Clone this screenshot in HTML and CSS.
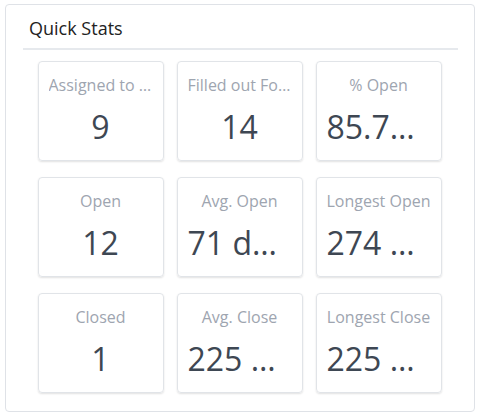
FILE: index.html
```html
<!DOCTYPE html>
<html lang="en">
<head>
  <meta charset="UTF-8">
  <meta name="viewport" content="width=device-width, initial-scale=1.0">
  <title>Quick Stats</title>
  <link rel="stylesheet" href="styles.css">
</head>
<body>
  <div class="panel">
    <div class="panel-header">Quick Stats</div>
    <div class="stats">
      <div class="stat"><div class="stat-label">Assigned to Me</div><div class="stat-value">9</div></div>
      <div class="stat"><div class="stat-label">Filled out Forms</div><div class="stat-value">14</div></div>
      <div class="stat"><div class="stat-label">% Open</div><div class="stat-value">85.71%</div></div>

      <div class="stat"><div class="stat-label">Open</div><div class="stat-value">12</div></div>
      <div class="stat"><div class="stat-label">Avg. Open</div><div class="stat-value">71 days</div></div>
      <div class="stat"><div class="stat-label">Longest Open</div><div class="stat-value">274 days</div></div>

      <div class="stat"><div class="stat-label">Closed</div><div class="stat-value">1</div></div>
      <div class="stat"><div class="stat-label">Avg. Close</div><div class="stat-value">225 days</div></div>
      <div class="stat"><div class="stat-label">Longest Close</div><div class="stat-value">225 days</div></div>
    </div>
  </div>
</body>
</html>
```

FILE: styles.css
```css
body {
  margin: 0;
  background: #fff;
  font-family: 'Open Sans', sans-serif;
}

.panel {
  margin: 4px 5px 0 5px;
  height: 408px;
  border: 1px solid #dfe2e7;
  border-radius: 4px;
  box-sizing: border-box;
}

.panel-header {
  margin: 0 16px 0 17px;
  padding: 10px 6px 0 6px;
  height: 33px;
  border-bottom: 2px solid #e6e9ed;
  font-size: 18px;
  line-height: 26px;
  color: #222;
}

.stats {
  display: grid;
  grid-template-columns: repeat(3, 126px);
  grid-auto-rows: 100px;
  column-gap: 13px;
  row-gap: 16px;
  justify-content: center;
  margin-top: 11px;
  padding-right: 1px;
}

.stat {
  border: 1px solid #e1e4e8;
  border-radius: 4px;
  box-shadow: 0 1px 2px rgba(0, 0, 0, 0.12);
  padding: 11px 10px 0 10px;
  text-align: center;
  overflow: hidden;
}

.stat-label {
  font-size: 16px;
  line-height: 24px;
  color: #9ea5b0;
  white-space: nowrap;
  overflow: hidden;
  text-overflow: ellipsis;
}

.stat-value {
  margin-top: 10px;
  font-size: 32px;
  line-height: 40px;
  color: #3e4753;
  white-space: nowrap;
  overflow: hidden;
  text-overflow: ellipsis;
}
```
